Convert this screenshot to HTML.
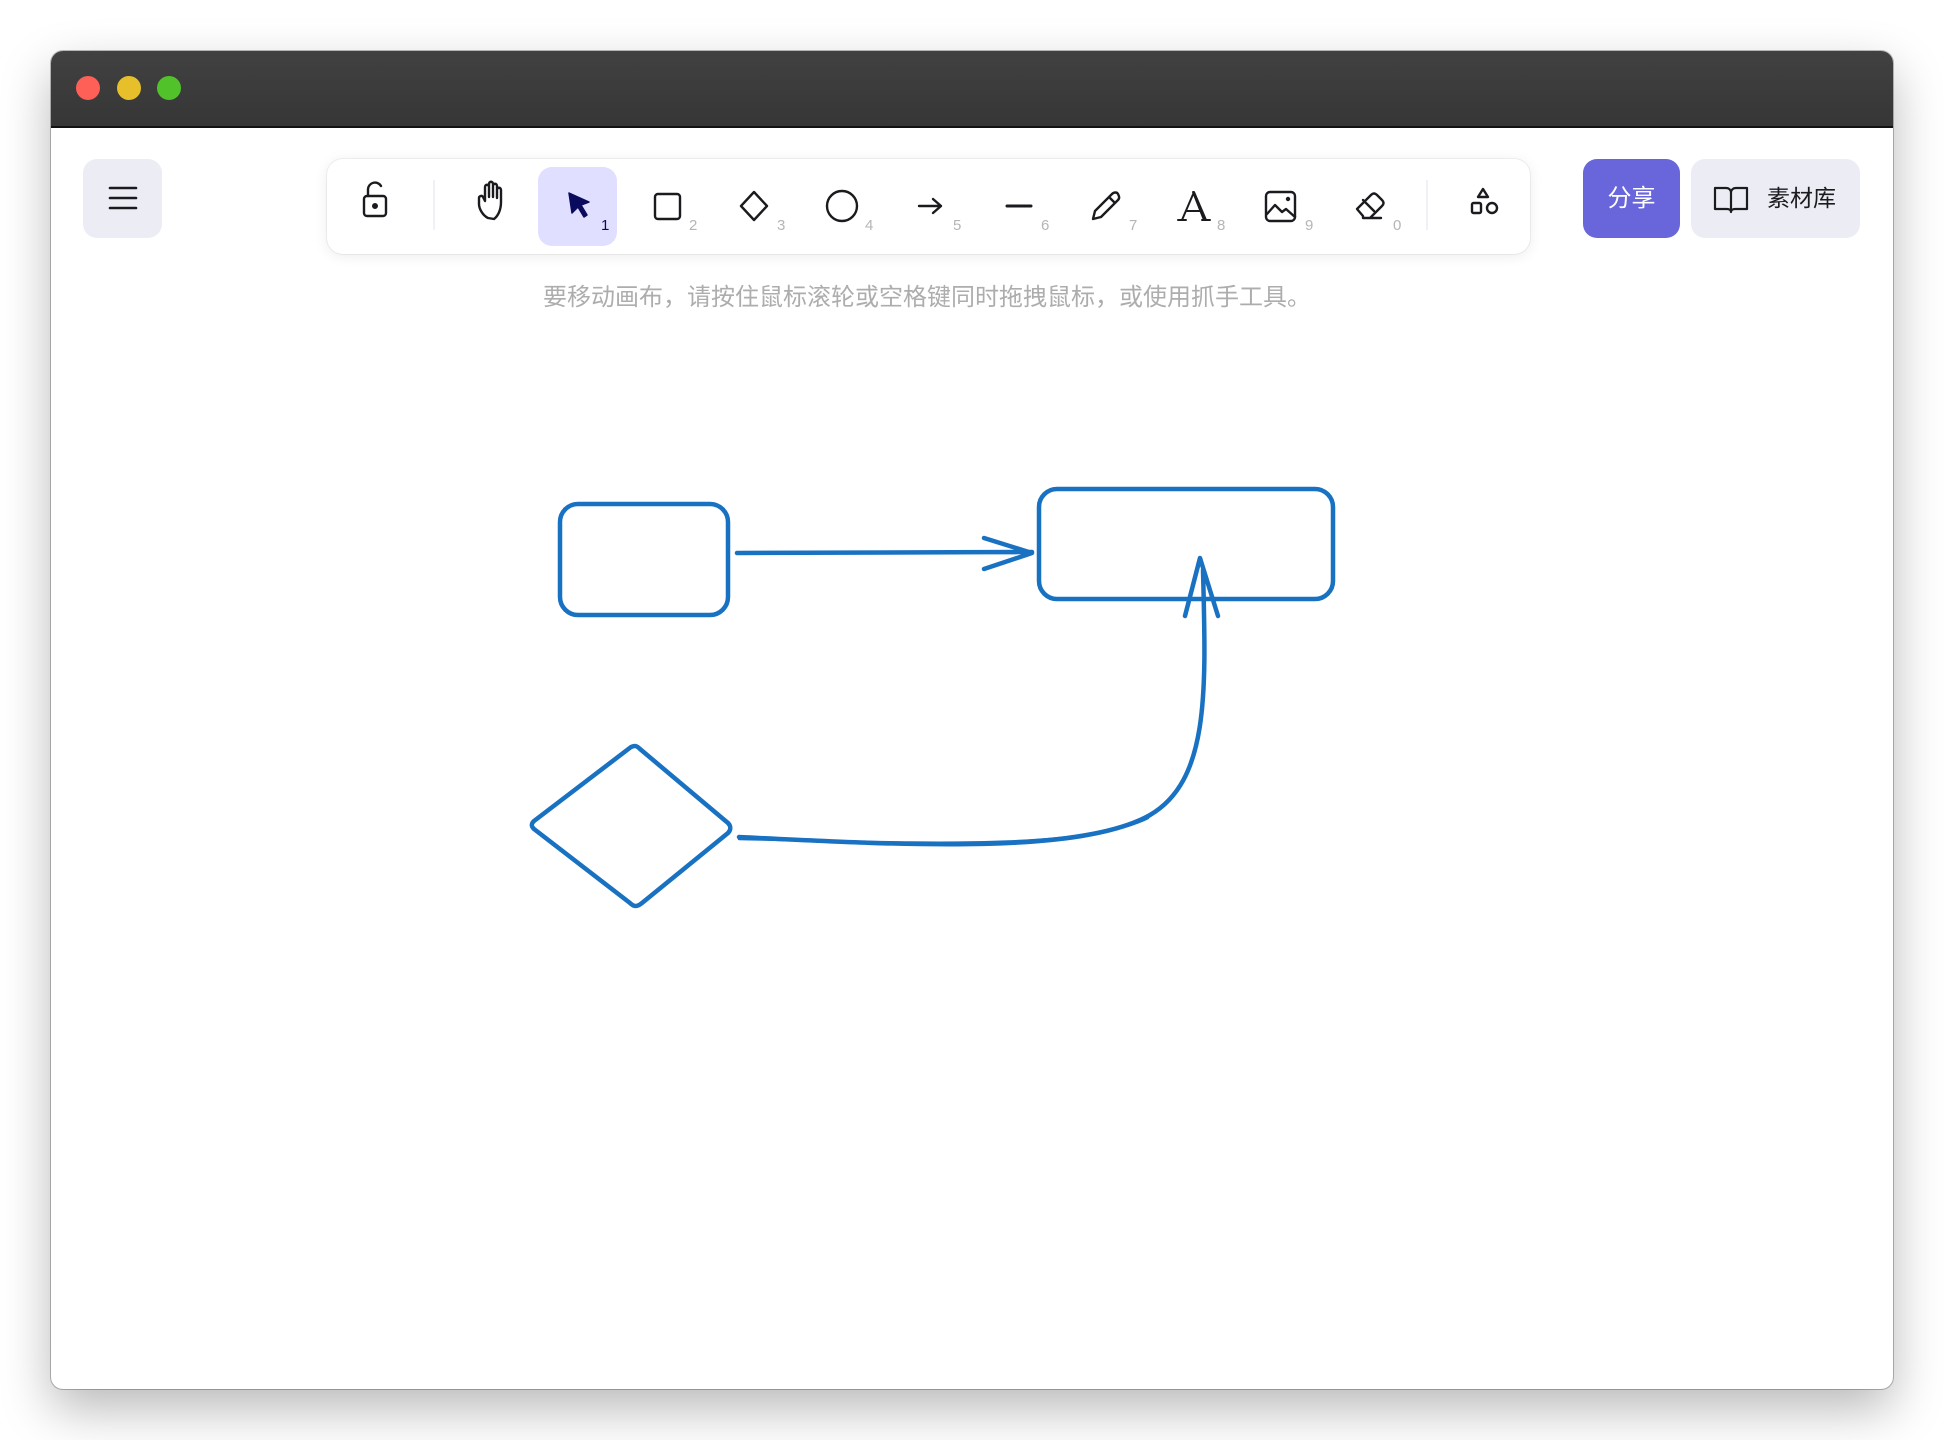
<!DOCTYPE html>
<html><head><meta charset="utf-8"><style>
body{margin:0;width:1944px;height:1440px;background:#fff;position:relative;overflow:hidden;font-family:"Liberation Sans","Noto Sans CJK SC",sans-serif}
.win{position:absolute;left:51px;top:51px;width:1842px;height:1338px;border-radius:12px;background:#fff;box-shadow:0 20px 50px rgba(0,0,0,.28),0 0 0 1px rgba(0,0,0,.25);overflow:hidden}
.title{position:absolute;left:0;top:0;width:100%;height:75px;background:linear-gradient(#414141,#363636);border-bottom:2px solid #111}
.dot{position:absolute;top:25px;width:24px;height:24px;border-radius:50%}
.abs{position:absolute}
.tb{position:absolute;left:276px;top:108px;width:1203px;height:95px;border-radius:16px;background:#fff;box-shadow:0 2px 14px rgba(0,0,0,.08),0 0 0 1px rgba(0,0,0,.05)}
.num{position:absolute;font-size:15px;color:#b5b5b5;top:166px}
</style></head><body>
<div class="win">
<div class="title">
<div class="dot" style="left:25px;background:#fe5f57"></div>
<div class="dot" style="left:66px;background:#e6bf2a"></div>
<div class="dot" style="left:106px;background:#52c22b"></div>
</div>
<div class="abs" style="left:32px;top:108px;width:79px;height:79px;border-radius:14px;background:#ececf4"></div>
<svg class="abs" style="left:56px;top:133px" width="32" height="28"><g stroke="#1b1b1f" stroke-width="2.6" stroke-linecap="round"><line x1="3" y1="4" x2="29" y2="4"/><line x1="3" y1="14" x2="29" y2="14"/><line x1="3" y1="24" x2="29" y2="24"/></g></svg>
<div class="tb"></div>
<div class="abs" style="left:382px;top:129px;width:2px;height:50px;background:#f0f0f8"></div>
<div class="abs" style="left:1375px;top:129px;width:2px;height:50px;background:#f0f0f8"></div>
<div class="abs" style="left:487px;top:116px;width:79px;height:79px;border-radius:14px;background:#e0dfff"></div>
<svg width="1944" height="260" class="abs" style="left:0;top:0" fill="none" stroke="#1b1b1f" stroke-width="2.4" stroke-linecap="round" stroke-linejoin="round">
<rect x="313" y="145" width="22" height="20" rx="3"/><path d="M317 145v-7a7 7 0 0 1 13-3"/><circle cx="324" cy="155" r="1.8" fill="#1b1b1f"/>
<path d="M437 167c-6-3-9-10-9-14v-6c0-2 3-3 4-1l2 4v-14c0-3 4-3 4 0v10-13c0-3 4-3 4 0v13-11c0-3 4-3 4 0v12-8c0-3 4-3 4 0v12c0 8-3 14-7 17z"/>
<path d="M518 142l20 9-8 3 6 10-3 2-6-10-6 6z" fill="#0a0a5e" stroke="#0a0a5e" stroke-width="1.5"/>
<rect x="604" y="143" width="25" height="25" rx="3"/>
<path d="M703 141l13 14-13 14-13-14z"/>
<circle cx="791" cy="155" r="15"/>
<path d="M868 155h22M882 148l8 7-8 7"/>
<path d="M956 155h24" stroke-width="3"/>
<path d="M1042 168l2-8 17-17c2-2 5-2 6 0s2 4 0 6l-17 17z M1058 146l6 6"/>
<path d="M1131 169l12-28 12 28M1135 160h16M1127 169h8M1151 169h8M1142 141l11 28" stroke-width="2"/>
<rect x="1215" y="141" width="29" height="29" rx="4"/><path d="M1216 163l8-9 7 7 4-3 9 8"/><circle cx="1237" cy="148" r="1" fill="#1b1b1f"/>
<path d="M1312 165l-6-7 14-14c2-2 4-2 6 0l5 5c2 2 2 4 0 6l-12 12h-7zM1312 149l11 11M1312 167h18"/>
<path d="M1432 138l5 8h-10z"/><rect x="1421" y="152" width="9" height="10" rx="1.5"/><circle cx="1441" cy="157" r="5"/>
</svg>
<div class="num" style="left:550px;color:#0a0a5e">1</div>
<div class="num" style="left:638px">2</div>
<div class="num" style="left:726px">3</div>
<div class="num" style="left:814px">4</div>
<div class="num" style="left:902px">5</div>
<div class="num" style="left:990px">6</div>
<div class="num" style="left:1078px">7</div>
<div class="num" style="left:1166px">8</div>
<div class="num" style="left:1254px">9</div>
<div class="num" style="left:1342px">0</div>
<div class="abs" style="left:1532px;top:108px;width:97px;height:79px;border-radius:14px;background:#6965db;color:#fff;font-size:24px;line-height:79px;text-align:center">分享</div>
<div class="abs" style="left:1640px;top:108px;width:169px;height:79px;border-radius:14px;background:#ececf4;color:#1b1b1f;font-size:23px;line-height:79px"><svg class="abs" style="left:22px;top:25px" width="36" height="30" fill="none" stroke="#1b1b1f" stroke-width="2.2" stroke-linejoin="round"><path d="M2 4h11c3 0 5 2 5 5v19c0-2-2-3-4-3H2zM34 4H23c-3 0-5 2-5 5v19c0-2 2-3 4-3h12z"/></svg><span style="position:absolute;left:76px">素材库</span></div>
<div class="abs" style="left:0;width:1752px;top:226px;text-align:center;font-size:24px;color:#adadad">要移动画布，请按住鼠标滚轮或空格键同时拖拽鼠标，或使用抓手工具。</div>
</div>
<svg class="abs" style="left:0;top:0" width="1944" height="1440" fill="none" stroke="#1971c2" stroke-width="4.5" stroke-linecap="round" stroke-linejoin="round">
<rect x="560" y="504" width="168" height="111" rx="18"/>
<rect x="1039" y="489" width="294" height="110" rx="18"/>
<path d="M737 553L1032 552M984 538l48 15-48 16"/>
<path d="M631 747c4-2 6-1 9 2l88 74c3 3 3 7 0 10l-86 70c-5 4-8 4-12 0l-96-74c-3-3-3-5 0-8l97-74z"/>
<path d="M739 837C900 845 1080 855 1150 815C1210 780 1206 690 1203 570M1185 616l15-58 18 58"/>
<path d="M739 839C900 842 1080 852 1148 818" stroke-width="2.5"/>
</svg>
</body></html>
